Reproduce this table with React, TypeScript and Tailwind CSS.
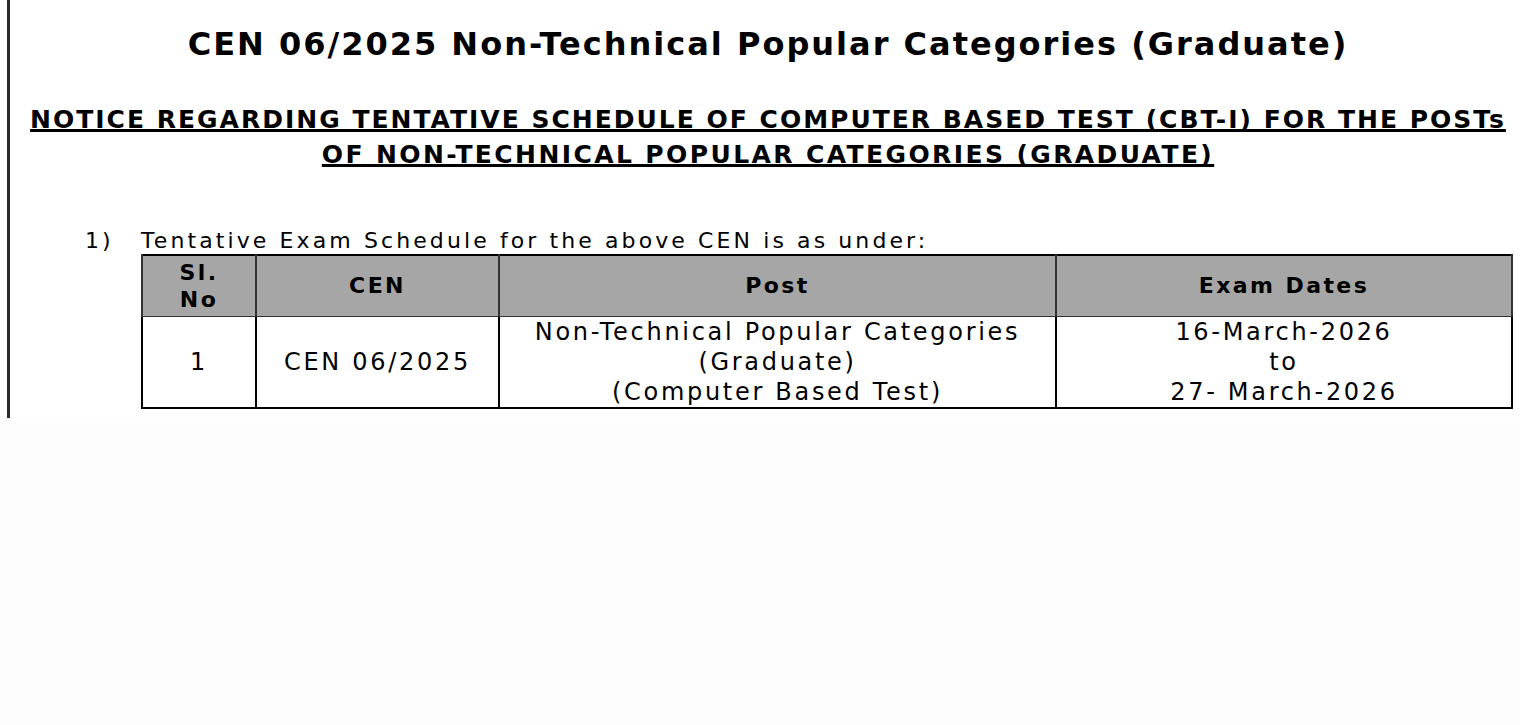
const FONT = "font-['DejaVu_Sans',sans-serif]";

const HEADERS = [
  { key: "sl", label: ["Sl.", "No"], width: "w-[114px]" },
  { key: "cen", label: ["CEN"], width: "w-[243px]" },
  { key: "post", label: ["Post"], width: "w-[557px]" },
  { key: "dates", label: ["Exam Dates"], width: "w-[456px]" },
];

const ROW = {
  sl: ["1"],
  cen: ["CEN 06/2025"],
  post: ["Non-Technical Popular Categories", "(Graduate)", "(Computer Based Test)"],
  dates: ["16-March-2026", "to", "27- March-2026"],
};

export default function App() {
  return (
    <div className={`min-h-screen bg-[#fdfdfd] text-black ${FONT}`}>
      <div className="h-[418px] overflow-hidden bg-white pl-[7px]">
        <div className="h-full border-l-[3px] border-[#2a2a2a] pl-[6px]">
          <h1 className="pt-[24px] text-center text-[32px] font-bold leading-[40px] tracking-[2px]">
            CEN 06/2025 Non-Technical Popular Categories (Graduate)
          </h1>

          <h2 className="mt-[38px] text-center text-[25px] font-bold leading-[35px] tracking-[2px] underline decoration-[3px] underline-offset-[1px] [text-decoration-skip-ink:none]">
            NOTICE REGARDING TENTATIVE SCHEDULE OF COMPUTER BASED TEST (CBT-I) FOR THE POSTs
            <br />
            <span className="tracking-[2.4px]">OF NON-TECHNICAL POPULAR CATEGORIES (GRADUATE)</span>
          </h2>

          <div className="mt-[56px] pl-[69px]">
            <p className="flex text-[22px] leading-[26px] tracking-[3.1px]">
              <span className="w-[56px] shrink-0">1)</span>
              <span>Tentative Exam Schedule for the above CEN is as under:</span>
            </p>

            <table className="ml-[56px] w-[1370px] table-fixed border-collapse border-2 border-black">
              <thead>
                <tr className="bg-[#a6a6a6]">
                  {HEADERS.map((h) => (
                    <th
                      key={h.key}
                      className={`${h.width} h-[61px] border-x-2 border-b border-[#333] align-middle text-[22px] font-bold leading-[27px] tracking-[2.4px]`}
                    >
                      {h.label.map((l) => (
                        <div key={l}>{l}</div>
                      ))}
                    </th>
                  ))}
                </tr>
              </thead>
              <tbody>
                <tr>
                  {HEADERS.map((h) => (
                    <td
                      key={h.key}
                      className="h-[90px] border-x-2 border-black text-center align-middle text-[24px] leading-[30px] tracking-[2.7px]"
                    >
                      {ROW[h.key as keyof typeof ROW].map((l) => (
                        <div key={l}>{l}</div>
                      ))}
                    </td>
                  ))}
                </tr>
              </tbody>
            </table>
          </div>
        </div>
      </div>
    </div>
  );
}
